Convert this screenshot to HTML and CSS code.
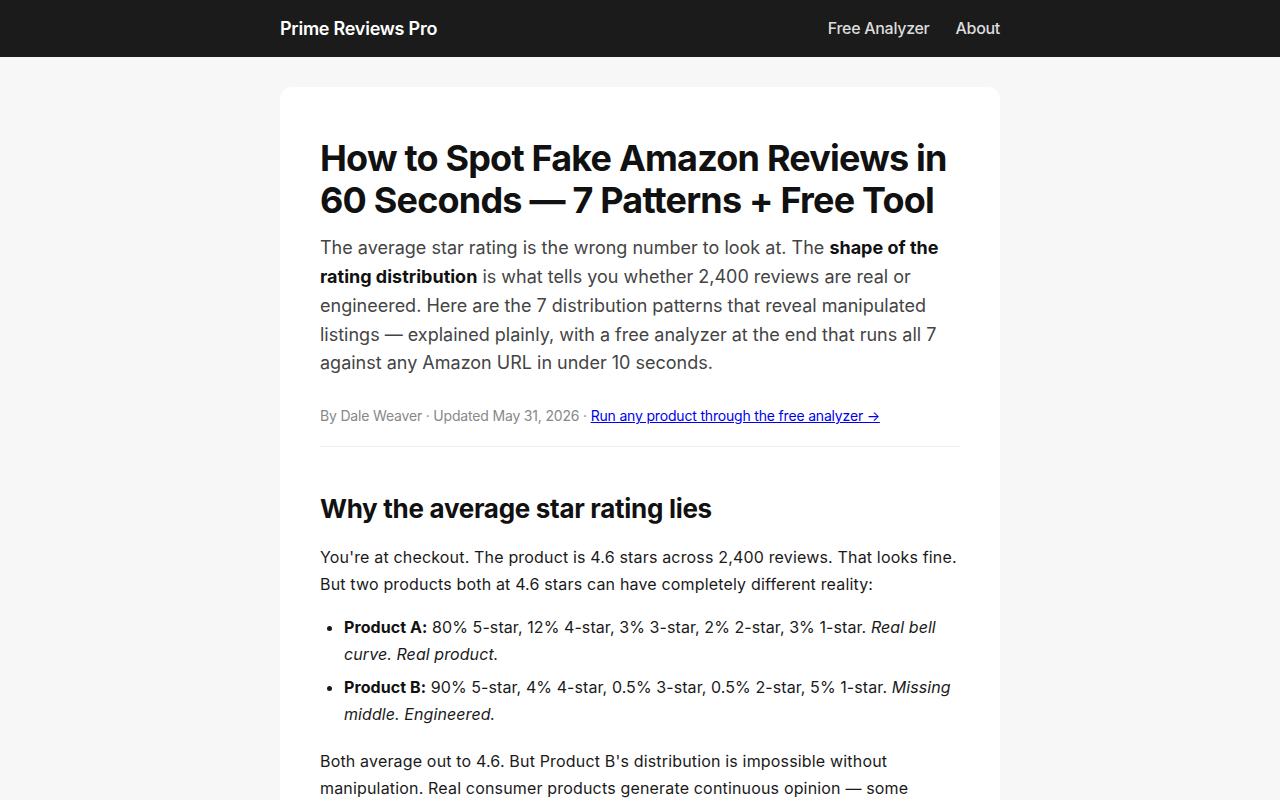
FILE: index.html
```html
<!DOCTYPE html>
<html lang="en">
<head>
<meta charset="utf-8">
<title>How to Spot Fake Amazon Reviews in 60 Seconds</title>
<link rel="stylesheet" href="styles.css">
</head>
<body>
<header class="site-header">
  <div class="header-inner">
    <a class="brand" href="#">Prime Reviews Pro</a>
    <nav class="nav">
      <a href="#">Free Analyzer</a>
      <a href="#">About</a>
    </nav>
  </div>
</header>
<main class="wrap">
  <article class="card">
    <h1 class="title">How to Spot Fake Amazon Reviews in 60 Seconds — 7 Patterns + Free Tool</h1>
    <p class="lead">The average star rating is the wrong number to look at. The <strong>shape of the rating distribution</strong> is what tells you whether 2,400 reviews are real or engineered. Here are the 7 distribution patterns that reveal manipulated listings — explained plainly, with a free analyzer at the end that runs all 7 against any Amazon URL in under 10 seconds.</p>
    <p class="meta">By Dale Weaver · Updated May 31, 2026 · <a href="#">Run any product through the free analyzer →</a></p>
    <hr class="divider">
    <h2 class="section-title">Why the average star rating lies</h2>
    <p class="body">You're at checkout. The product is 4.6 stars across 2,400 reviews. That looks fine. But two products both at 4.6 stars can have completely different reality:</p>
    <ul class="list">
      <li><strong>Product A:</strong> 80% 5-star, 12% 4-star, 3% 3-star, 2% 2-star, 3% 1-star. <em>Real bell curve. Real product.</em></li>
      <li><strong>Product B:</strong> 90% 5-star, 4% 4-star, 0.5% 3-star, 0.5% 2-star, 5% 1-star. <em>Missing middle. Engineered.</em></li>
    </ul>
    <p class="body">Both average out to 4.6. But Product B's distribution is impossible without manipulation. Real consumer products generate continuous opinion — some people love it, some like it, some are lukewarm, some are disappointed. When the middle of the distribution vanishes, something other than honest opinion is shaping the numbers.</p>
  </article>
</main>
</body>
</html>
```

FILE: styles.css
```css
* { box-sizing: border-box; }
html, body { margin: 0; padding: 0; }
body {
  font-family: Inter, "Noto Sans", sans-serif;
  background: #f7f7f7;
  color: #1a1a1a;
}
.site-header {
  background: #1b1b1b;
  height: 57px;
}
.header-inner {
  width: 720px;
  margin: 0 auto;
  height: 100%;
  display: flex;
  align-items: center;
  justify-content: space-between;
  padding-bottom: 1px;
}
.brand {
  color: #fff;
  text-decoration: none;
  font-size: 18px;
  font-weight: 600;
  letter-spacing: -0.25px;
}
.nav { display: flex; gap: 26px; }
.nav a {
  color: #ddd;
  text-decoration: none;
  font-size: 16px;
  font-weight: 500;
  letter-spacing: -0.3px;
}
.wrap {
  width: 720px;
  margin: 30px auto 0;
}
.card {
  background: #fff;
  border-radius: 12px;
  padding: 50px 40px 40px;
}
.title {
  font-size: 36px;
  line-height: 1.17;
  font-weight: 700;
  letter-spacing: -0.8px;
  color: #111;
  margin: 0 0 13px;
}
.lead {
  font-size: 18px;
  line-height: 1.6;
  color: #444;
  margin: 0 0 29px;
}
.lead strong { color: #111; font-weight: 700; }
.meta {
  font-size: 14px;
  color: #888;
  margin: 0;
  letter-spacing: -0.18px;
}
.meta a { color: #0000ee; }
.divider {
  border: 0;
  border-top: 1px solid #eee;
  margin: 22px 0 0;
}
.section-title {
  font-size: 26px;
  line-height: 1.3;
  font-weight: 700;
  letter-spacing: -0.3px;
  color: #111;
  margin: 45px 0 18px;
}
.body {
  font-size: 16px;
  line-height: 1.7;
  letter-spacing: 0.17px;
  margin: 0 0 16px;
}
.list {
  font-size: 16px;
  line-height: 1.65;
  letter-spacing: 0.08px;
  padding-left: 24px;
  margin: 0 0 21px;
}
.list li { margin-bottom: 7px; }
.list strong { font-weight: 700; color: #111; }
```
